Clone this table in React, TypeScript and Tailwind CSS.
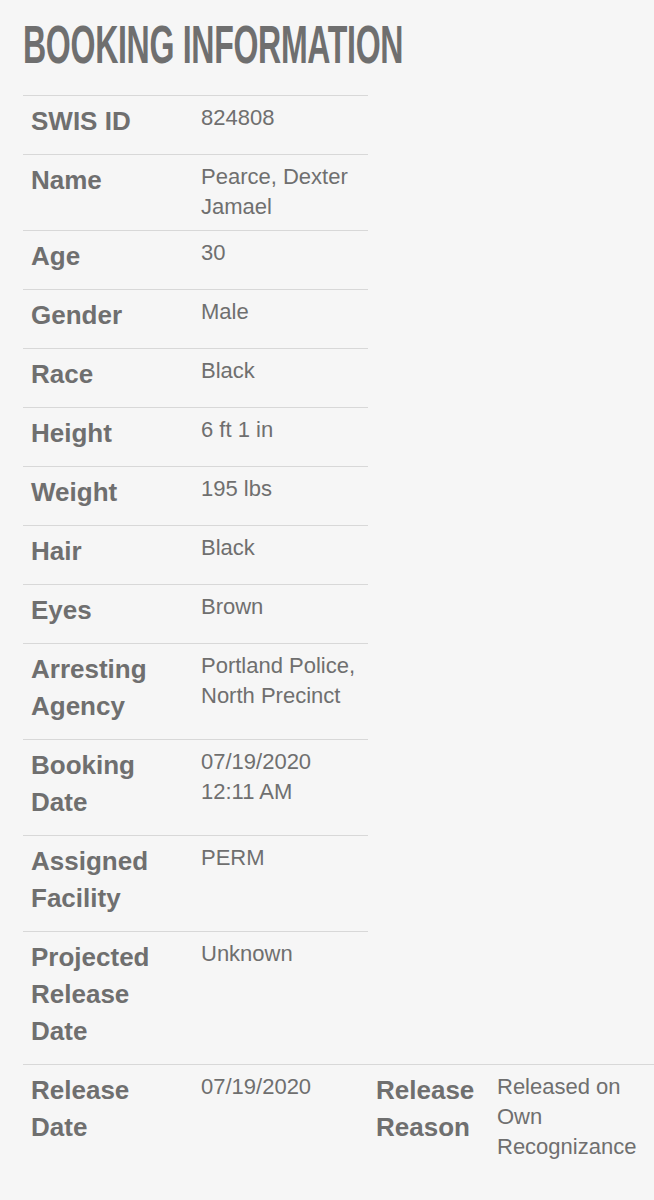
import React from 'react';

const ROWS: { label: string; value: string }[] = [
    { label: 'SWIS ID', value: '824808' },
    { label: 'Name', value: 'Pearce, Dexter Jamael' },
    { label: 'Age', value: '30' },
    { label: 'Gender', value: 'Male' },
    { label: 'Race', value: 'Black' },
    { label: 'Height', value: '6 ft 1 in' },
    { label: 'Weight', value: '195 lbs' },
    { label: 'Hair', value: 'Black' },
    { label: 'Eyes', value: 'Brown' },
    { label: 'Arresting Agency', value: 'Portland Police, North Precinct' },
    { label: 'Booking Date', value: '07/19/2020 12:11 AM' },
    { label: 'Assigned Facility', value: 'PERM' },
    { label: 'Projected Release Date', value: 'Unknown' },
];

const labelCls = "px-2 pb-[6px] font-bold text-[26px] leading-[37px]";
const valueCls = "px-2 text-[22px] leading-[30px]";

export default function App() {
    return (
        <div className="min-h-[1200px] w-[654px] overflow-hidden bg-[#f6f6f6] text-[#6f6f6f] font-['Liberation_Sans',Arial,sans-serif]">
            <div className="pl-[23px] pt-[20px]">
                {/* Titre */}
                <h1 className="h-[75px] origin-left scale-x-[0.605] whitespace-nowrap font-['Liberation_Sans',sans-serif] text-[53px] font-bold leading-[50px] tracking-[-0.5px]">
                    BOOKING INFORMATION
                </h1>

                {/* Tableau principal */}
                <div className="w-[345px]">
                    {ROWS.map((row) => (
                        <div key={row.label} className="grid grid-cols-[170px_175px] border-t border-[#d8d8d8] pt-[7px] pb-[8px]">
                            <div className={labelCls}>{row.label}</div>
                            <div className={valueCls}>{row.value}</div>
                        </div>
                    ))}
                </div>

                {/* Dernière ligne pleine largeur */}
                <div className="grid w-[631px] grid-cols-[170px_175px_121px_165px] border-t border-[#d8d8d8] pt-[7px] pb-[8px]">
                    <div className={labelCls}>Release Date</div>
                    <div className={valueCls}>07/19/2020</div>
                    <div className={labelCls}>Release Reason</div>
                    <div className={valueCls}>Released on Own Recognizance</div>
                </div>
            </div>
        </div>
    );
}
